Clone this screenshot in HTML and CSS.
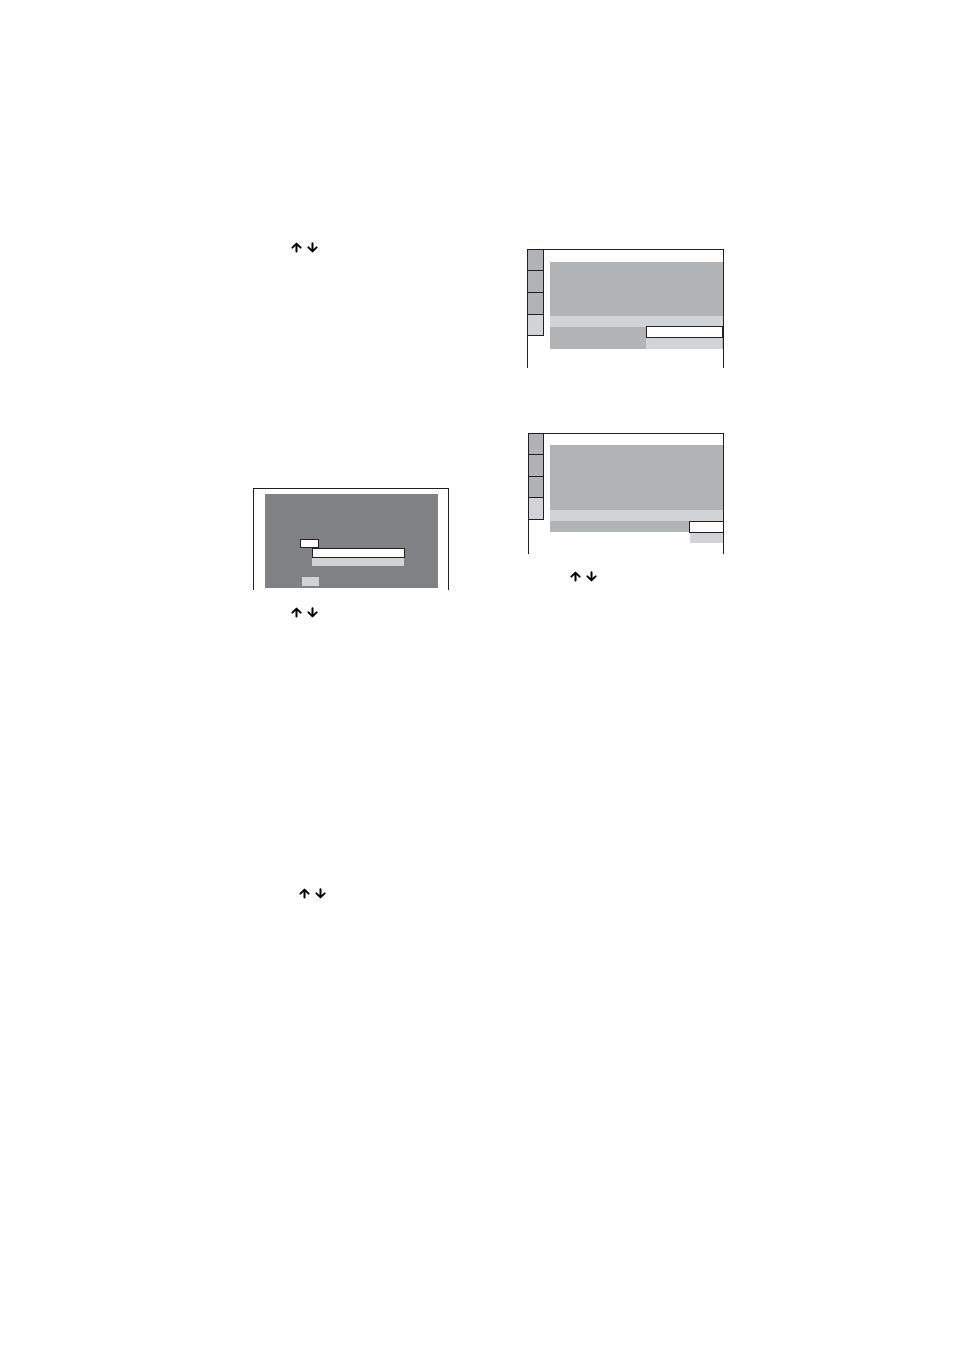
FILE: index.html
```html
<!DOCTYPE html>
<html lang="en">
<head>
  <meta charset="UTF-8" />
  <meta name="viewport" content="width=device-width, initial-scale=1.0" />
  <title>Setup screens</title>
  <link rel="stylesheet" href="styles.css">
</head>
<body>
  <!-- Shared arrow pair -->
  <svg class="symbols" aria-hidden="true">
    <symbol id="arrows" viewBox="0 0 28 12">
      <path d="M1.4 5.6L5.5 1.6L9.6 5.6M5.5 2V9.6" />
      <path d="M17.4 5.4L21.5 9.4L25.6 5.4M21.5 1.2V9" />
    </symbol>
  </svg>

  <main class="page">
    <section class="column">
      <div class="keys first"><svg class="arrows" role="img" aria-label="Up, down"><use href="#arrows"/></svg></div>

      <div class="screen dialog-screen">
        <div class="dialog">
          <div class="field-box"></div>
          <div class="choice selected"></div>
          <div class="choice"></div>
          <div class="field-fill"></div>
        </div>
      </div>

      <div class="keys"><svg class="arrows" role="img" aria-label="Up, down"><use href="#arrows"/></svg></div>
      <div class="keys last"><svg class="arrows" role="img" aria-label="Up, down"><use href="#arrows"/></svg></div>
    </section>

    <section class="column column-right">
      <div class="screen menu-screen">
        <div class="tabs">
          <div class="tab"></div>
          <div class="tab"></div>
          <div class="tab"></div>
          <div class="tab active"></div>
        </div>
        <div class="menu">
          <div class="items"></div>
          <div class="current"></div>
          <div class="rest"></div>
          <div class="popup wide">
            <div class="option selected"></div>
            <div class="option"></div>
          </div>
        </div>
      </div>

      <div class="screen menu-screen second">
        <div class="tabs">
          <div class="tab"></div>
          <div class="tab"></div>
          <div class="tab"></div>
          <div class="tab active"></div>
        </div>
        <div class="menu">
          <div class="items"></div>
          <div class="current"></div>
          <div class="rest"></div>
          <div class="popup narrow">
            <div class="option selected"></div>
            <div class="option"></div>
          </div>
        </div>
      </div>

      <div class="keys"><svg class="arrows" role="img" aria-label="Up, down"><use href="#arrows"/></svg></div>
    </section>
  </main>
</body>
</html>
```

FILE: styles.css
```css
:root {
  --line: #231f20;
  --dark: #808184;
  --mid: #b1b3b5;
  --light: #d1d3d4;
}
* {
  box-sizing: border-box;
}
body {
  margin: 0;
  min-height: 100vh;
  background: #fff;
  font-family: "Liberation Sans", Arial, sans-serif;
}
.symbols {
  position: absolute;
  width: 0;
  height: 0;
}
.page {
  display: grid;
  grid-template-columns: 196fr 197fr;
  gap: 78px;
  padding: 242px 230px 0 253px;
}
.column {
  display: flex;
  flex-direction: column;
}
.column-right {
  padding-top: 7px;
}

/* Arrow keys */
.keys {
  padding-left: 38px;
  margin-top: 17px;
}
.keys.first {
  margin-top: 0;
  margin-bottom: 234px;
}
.keys.last {
  margin-top: 269px;
  padding-left: 46px;
}
.column-right .keys {
  padding-left: 43px;
}
.arrows {
  display: block;
  width: 28px;
  height: 12px;
  fill: none;
  stroke: #000;
  stroke-width: 2;
  stroke-linecap: round;
  stroke-linejoin: round;
}

/* Screens are open at the bottom */
.screen {
  border: 1px solid var(--line);
  border-bottom: none;
}

/* Dialog screen */
.dialog-screen {
  padding: 5px 10px 2px 11px;
}
.dialog {
  display: flex;
  flex-direction: column;
  height: 94px;
  padding: 45px 33px 0 35px;
  background: var(--dark);
}
.field-box {
  width: 19px;
  height: 9px;
  background: #fff;
  border: 1px solid var(--line);
}
.choice {
  height: 8px;
  margin-left: 12px;
  margin-right: 1px;
  background: var(--light);
}
.choice.selected {
  height: 10px;
  margin-right: 0;
  background: #fff;
  border: 1px solid var(--line);
}
.field-fill {
  width: 17px;
  height: 9px;
  margin: 11px 0 0 2px;
  background: var(--light);
}

/* Menu screens */
.menu-screen {
  display: flex;
  gap: 6px;
  height: 119px;
}
.tabs {
  flex: 0 0 16px;
}
.tab {
  height: 22px;
  background: var(--mid);
  border-right: 1px solid var(--line);
  border-bottom: 1px solid var(--line);
}
.tab:first-child,
.tab.active {
  height: 21px;
}
.tab.active {
  background: var(--light);
}
.menu {
  position: relative;
  flex: 1;
  padding-top: 12px;
}
.items {
  height: 54px;
  background: var(--mid);
}
.current {
  height: 11px;
  background: var(--light);
}
.rest {
  height: 22px;
  background: var(--mid);
}
.popup {
  position: absolute;
  top: 76px;
  right: 0;
}
.popup.wide {
  width: 77px;
}
.popup.narrow {
  top: 87px;
  width: 34px;
}
.option {
  height: 11px;
  margin-right: 1px;
  background: var(--light);
}
.option.selected {
  height: 12px;
  margin-right: 0;
  background: #fff;
  border: 1px solid var(--line);
}
.narrow .option {
  height: 10px;
  margin-left: 1px;
  margin-right: 0;
}
.narrow .option.selected {
  height: 12px;
  margin-left: 0;
  border-right: none;
}

.second {
  height: 121px;
  margin-top: 65px;
  margin-left: 1px;
}
.second .tabs {
  flex-basis: 15px;
}
.second .tab:nth-child(3) {
  height: 21px;
}
.second .tab.active {
  height: 22px;
}
.second .menu {
  padding-top: 11px;
}
.second .items {
  height: 65px;
}
.second .rest {
  height: 11px;
}
```
